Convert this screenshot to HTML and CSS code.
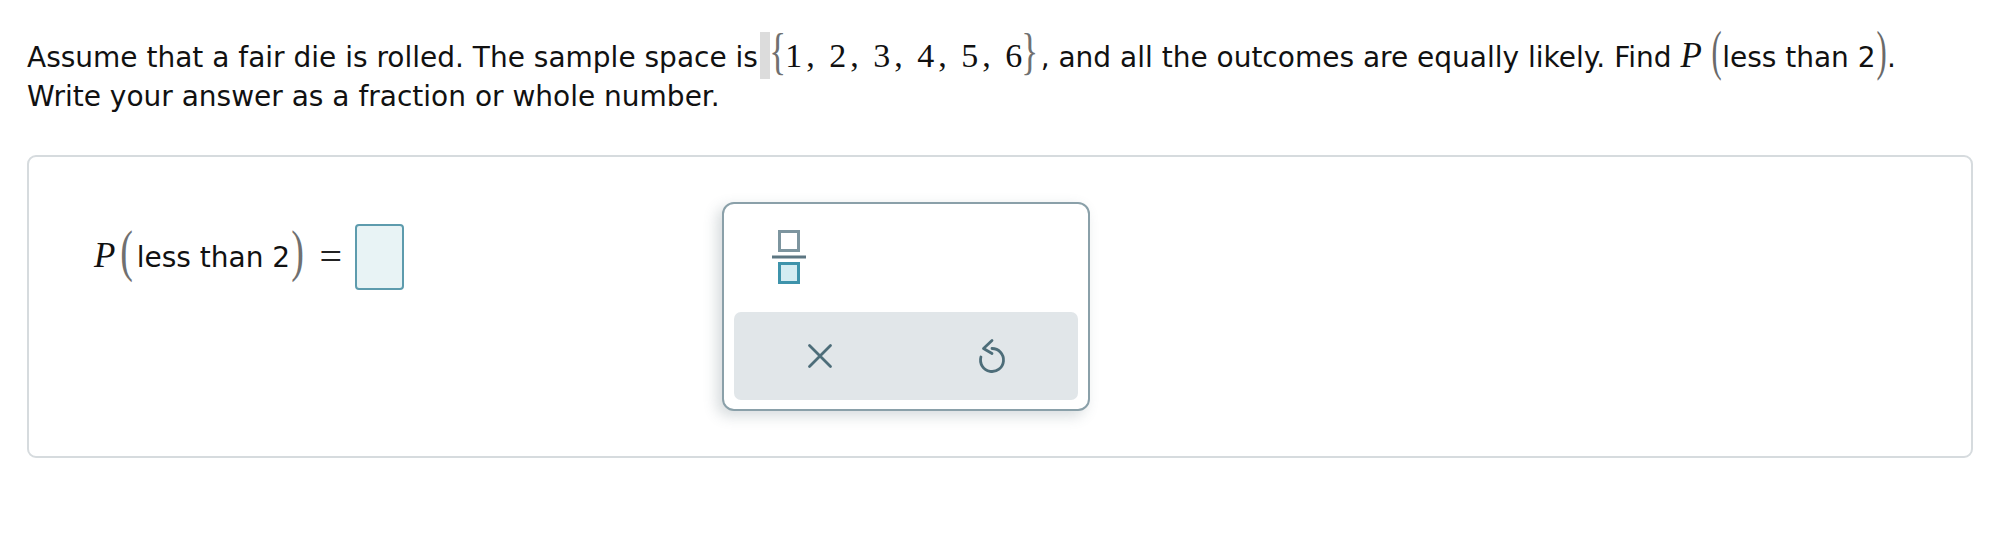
FILE: index.html
```html
<!DOCTYPE html>
<html>
<head>
<meta charset="utf-8">
<link rel="stylesheet" href="styles.css">
</head>
<body>
<div class="page">
  <div class="question">
    <p class="line">Assume that a fair die is rolled. The sample space is<span class="hl"></span><span class="m"><span class="br lb">{</span><span class="n">1</span><span class="cm">,</span><span class="n">2</span><span class="cm">,</span><span class="n">3</span><span class="cm">,</span><span class="n">4</span><span class="cm">,</span><span class="n">5</span><span class="cm">,</span><span class="n">6</span><span class="br rb">}</span></span>, and all the outcomes are equally likely. Find <span class="m"><span class="mi">P</span><span class="pr pl">(</span><span class="tx">less than 2</span><span class="pr pc">)</span></span>.</p>
    <p class="line">Write your answer as a fraction or whole number.</p>
  </div>

  <div class="card">
    <div class="eq">
      <span class="m em"><span class="mi">P</span><span class="pr pl">(</span><span class="tx">less than 2</span><span class="pr pc">)</span></span>
      <span class="eqsign">=</span>
      <span class="answer"></span>
    </div>

    <div class="keypad">
      <div class="keys">
        <button class="key frac" aria-label="fraction">
          <svg width="36" height="56" viewBox="0 0 36 56">
            <rect x="7.5" y="1.5" width="19" height="19" fill="#fff" stroke="#7d959f" stroke-width="3"/>
            <rect x="0" y="25.5" width="34" height="3" fill="#5c7682"/>
            <rect x="7.5" y="33.5" width="19" height="19" fill="#d4ecf2" stroke="#3e93ab" stroke-width="3"/>
          </svg>
        </button>
      </div>
      <div class="actions">
        <button class="act" aria-label="clear">
          <svg width="26" height="26" viewBox="0 0 26 26">
            <path d="M2.5 2.5 L23.5 23.5 M23.5 2.5 L2.5 23.5" stroke="#4d6d79" stroke-width="2.8" stroke-linecap="round" fill="none"/>
          </svg>
        </button>
        <button class="act" aria-label="undo">
          <svg width="30" height="36" viewBox="0 0 30 36">
            <path d="M15 10.5 A11.5 11.5 0 1 1 3.9 19" stroke="#4d6d79" stroke-width="2.8" stroke-linecap="round" fill="none"/>
            <path d="M15 2.5 L6.5 10.5 L15 15.5" stroke="#4d6d79" stroke-width="2.8" stroke-linecap="round" stroke-linejoin="round" fill="none"/>
          </svg>
        </button>
      </div>
    </div>
  </div>
</div>
</body>
</html>
```

FILE: styles.css
```css
html, body {
  margin: 0;
  padding: 0;
  background: #fff;
}

.page {
  padding: 32px 39px 0 27px;
  font-family: "DejaVu Sans", Verdana, sans-serif;
  font-size: 28px;
  color: #111;
}

.question .line {
  margin: 0;
  line-height: 39px;
  white-space: nowrap;
}

.hl {
  display: inline-block;
  width: 10px;
  height: 47px;
  margin: 0 0 -2px 2px;
  background: #dcdcdc;
  vertical-align: -10px;
}

.m {
  line-height: 20px;
  white-space: nowrap;
}

.br {
  display: inline-block;
  font-family: "Liberation Serif", "Times New Roman", serif;
  font-size: 32px;
  line-height: 1;
  color: #707070;
  transform: translateY(-4px) scale(1.1, 1.6);
  transform-origin: 50% 18.6px;
}

.rb {
  margin-right: 3px;
}

.n,
.cm {
  font-family: "Liberation Serif", "Times New Roman", serif;
  font-size: 34px;
  line-height: 1;
}

.cm {
  margin: 0 14.5px 0 4px;
}

.mi {
  font-family: "Liberation Serif", "Times New Roman", serif;
  font-style: italic;
  font-size: 35px;
  line-height: 1;
  margin-right: 9px;
}

.pr {
  display: inline-block;
  font-family: "Liberation Serif", "Times New Roman", serif;
  font-size: 34px;
  line-height: 1;
  color: #6a6a6a;
  transform: translateY(-2.5px) scale(0.9, 1.6);
  transform-origin: 50% 20px;
}

.card {
  position: relative;
  margin-top: 39px;
  height: 299px;
  border: 2px solid #d6dbde;
  border-radius: 9px;
}

.eq {
  display: flex;
  align-items: center;
  padding: 66px 0 0 65px;
}

.em {
  display: block;
  line-height: 66px;
  padding-top: 2px;
}

.em .mi {
  margin-right: 5px;
}

.em .pr {
  font-size: 40px;
  color: #707070;
  transform: translateY(-0.5px) scale(0.95, 1.4);
  transform-origin: 50% 23.5px;
}

.em .pl {
  margin-right: 3px;
}

.em .pc {
  margin-left: 1px;
}

.eqsign {
  font-family: "Liberation Serif", "Times New Roman", serif;
  font-size: 40px;
  line-height: 1;
  margin: 0 13px 0 15px;
  color: #222;
}

.answer {
  display: block;
  box-sizing: border-box;
  width: 49px;
  height: 66px;
  border: 2px solid #5d9bad;
  border-radius: 4px;
  background: #e8f3f5;
}

.keypad {
  position: absolute;
  left: 693px;
  top: 45px;
  box-sizing: border-box;
  width: 368px;
  height: 209px;
  border: 2px solid #8aa0a9;
  border-radius: 12px;
  background: #fff;
  box-shadow: -5px 5px 14px rgba(70, 90, 100, 0.22);
  padding: 0 10px 9px 10px;
  display: flex;
  flex-direction: column;
}

.keys {
  display: flex;
  height: 108px;
  padding-left: 38px;
  align-items: center;
}

.key {
  border: 0;
  background: transparent;
  padding: 0;
  display: flex;
  align-items: center;
  justify-content: center;
}

.frac svg {
  display: block;
}

.actions {
  flex: 1;
  display: flex;
  background: #e1e6e9;
  border-radius: 7px;
}

.act {
  flex: 1;
  border: 0;
  background: transparent;
  padding: 0;
  display: flex;
  align-items: center;
  justify-content: center;
}

.act svg {
  display: block;
}
```
